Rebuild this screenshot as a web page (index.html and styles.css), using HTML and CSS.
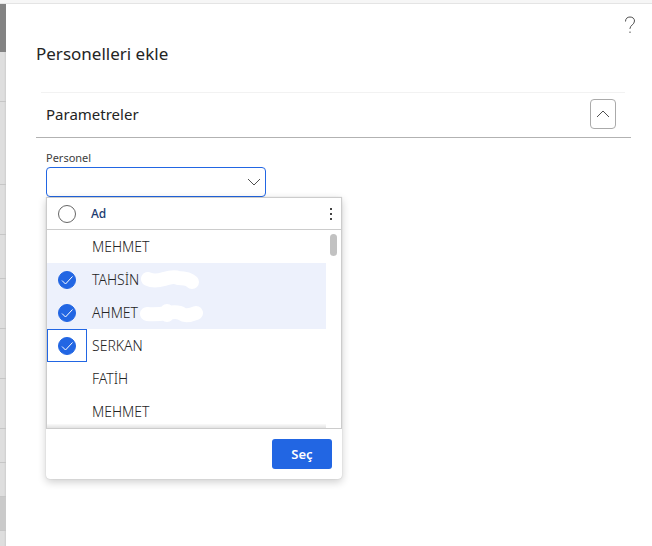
FILE: index.html
```html
<!DOCTYPE html>
<html lang="tr">
<head>
<meta charset="utf-8">
<title>Personelleri ekle</title>
<link rel="stylesheet" href="styles.css">
</head>
<body>
<div class="page">
  <div class="backdrop" aria-hidden="true">
    <div class="bar"></div>
    <div class="line tall"></div>
    <div class="line wide"></div>
    <div class="line"></div>
    <div class="line wide-end"></div>
    <div class="line"></div>
    <div class="line"></div>
    <div class="line"></div>
    <div class="line short"></div>
    <div class="line short"></div>
    <div class="line short dark"></div>
  </div>
  <main class="panel">
    <header class="panel-head">
      <h1>Personelleri ekle</h1>
      <button class="help" type="button" aria-label="Yardım">
        <svg width="12" height="18" viewBox="0 0 12 18"><path d="M1.500 5.500C1.500 2.500 3.300 1 6 1S10.500 2.500 10.500 5c0 3.500-4.500 4.300-4.500 7.500V13M6 15.500v1.500" /></svg>
      </button>
    </header>
    <section class="group">
      <div class="group-head">
        <h2>Parametreler</h2>
        <button class="collapse" type="button" aria-label="Daralt">
          <svg width="14" height="8" viewBox="0 0 14 8"><path d="M1 7l6-6 6 6" /></svg>
        </button>
      </div>
      <div class="field">
        <label for="personel">Personel</label>
        <div class="combo">
          <input id="personel" type="text" role="combobox" aria-expanded="true" aria-controls="menu">
          <button class="open" type="button" aria-label="Listeyi aç">
            <svg width="14" height="8" viewBox="0 0 14 8"><path d="M1 1l6 6 6-6" /></svg>
          </button>
          <div class="menu" id="menu">
            <div class="grid">
              <table>
                <thead>
                  <tr>
                    <th class="pick"><input type="checkbox" aria-label="Tümünü seç"></th>
                    <th>Ad</th>
                    <th class="edge"><button class="more" type="button" aria-label="Seçenekler"><svg width="4" height="14" viewBox="0 0 4 14"><path d="M1 1h2v2H1zM1 6h2v2H1zM1 11h2v2H1z" /></svg></button></th>
                  </tr>
                </thead>
                <tbody>
                  <tr><td class="pick"></td><td>MEHMET</td><td class="edge"></td></tr>
                  <tr class="on"><td class="pick"><input type="checkbox" checked aria-label="TAHSİN"></td><td>TAHSİN<svg class="mask" width="64" height="22" viewBox="0 0 64 22"><path d="M9 10q6 3 16 0t14-1q10 0 14 4" /></svg></td><td class="edge"></td></tr>
                  <tr class="on"><td class="pick"><input type="checkbox" checked aria-label="AHMET"></td><td>AHMET<svg class="mask" width="64" height="22" viewBox="0 0 64 22"><path d="M8 12q9 1 20-1t15 1 14-1M28 9v4" /></svg></td><td class="edge"></td></tr>
                  <tr><td class="pick focus"><input type="checkbox" checked aria-label="SERKAN"></td><td>SERKAN</td><td class="edge"></td></tr>
                  <tr><td class="pick"></td><td>FATİH</td><td class="edge"></td></tr>
                  <tr><td class="pick"></td><td>MEHMET</td><td class="edge"></td></tr>
                </tbody>
              </table>
              <div class="thumb"></div>
              <div class="fade"></div>
            </div>
            <div class="menu-foot"><button class="submit" type="button">Seç</button></div>
          </div>
        </div>
      </div>
    </section>
  </main>
</div>
</body>
</html>
```
FILE: styles.css
```css
* { box-sizing: border-box; }
body {
  margin: 0;
  background: #fff;
  color: #242424;
  font-family: "Segoe UI", "Noto Sans", sans-serif;
  font-size: 14px;
}
h1, h2 { margin: 0; font-weight: 400; }
button { padding: 0; border: 0; background: none; font: inherit; cursor: pointer; }
svg { display: block; fill: none; stroke: #505050; stroke-width: 1; }

.page {
  display: flex;
  min-height: 100vh;
  padding-top: 4px;
  background: linear-gradient(#f6f6f6 3px, #e4e4e4 3px, #e4e4e4 4px, #fff 4px);
}
.backdrop {
  flex: none;
  width: 6px;
  background: linear-gradient(90deg, #dedede 4px, #cecece);
}
.bar { height: 48px; background: #838383; }
.line { height: 50px; border-bottom: 1px solid #c6c6c6; }
.wide { height: 83px; }
.wide-end { height: 44px; }
.short { height: 34px; }
.dark { background: #cacaca; }

.panel { flex: 1; padding: 0 21px 24px 30px; background: #fff; }
.panel-head {
  display: flex;
  justify-content: space-between;
  height: 88px;
  padding-top: 10px;
}
h1 { padding-top: 27px; font-size: 17px; line-height: 26px; }
.help {
  display: flex;
  align-items: center;
  justify-content: center;
  width: 22px;
  height: 22px;
  margin-right: -10px;
}
.group-head {
  display: flex;
  align-items: center;
  justify-content: space-between;
  height: 46px;
  padding: 0 15px 1px 10px;
  border-bottom: 1px solid #b2b2b2;
  background: linear-gradient(#f2f2f2, #f2f2f2) 5px 0 / calc(100% - 11px) 1px no-repeat;
}
h2 { font-size: 15px; line-height: 24px; }
.collapse {
  display: flex;
  align-items: center;
  justify-content: center;
  width: 26px;
  height: 30px;
  border: 1px solid #aaa;
  border-radius: 4px;
}

.field { padding: 11px 10px 0; }
label { display: block; color: #404040; font-size: 11px; line-height: 18px; }
.combo { position: relative; width: 220px; }
.combo > input {
  display: block;
  width: 100%;
  height: 30px;
  padding: 0 32px 0 10px;
  border: 1px solid #2266e3;
  border-radius: 4px;
  outline: 0;
  font: inherit;
}
.open {
  position: absolute;
  top: 1px;
  right: 1px;
  display: flex;
  align-items: center;
  justify-content: center;
  width: 22px;
  height: 28px;
}
.menu {
  position: absolute;
  top: 100%;
  left: 0;
  width: 296px;
  border-radius: 0 0 4px 4px;
  background: #fff;
  box-shadow: 0 3px 8px rgba(0, 0, 0, .2), 0 0 1px rgba(0, 0, 0, .25);
}
.grid { position: relative; border: 1px solid #ccc; }
table { width: 100%; border-spacing: 0; table-layout: fixed; }
th, td { padding: 0 0 0 5px; text-align: left; }
th {
  height: 32px;
  border-bottom: 1px solid #ccc;
  padding-left: 4px;
  color: #1c3a70;
  font-size: 12px;
  font-weight: 500;
}
td { position: relative; height: 33px; color: #242424; font-weight: 300; line-height: 20px; }
.pick, th.pick { width: 40px; padding: 0; }
.edge, th.edge { width: 15px; padding: 0; }
.on td:not(.edge) { background: #edf1fc; }
.pick input {
  display: block;
  width: 18px;
  height: 18px;
  margin: 0 auto;
  border: 1px solid #666;
  border-radius: 50%;
  appearance: none;
}
.pick input:checked {
  border-color: #2266e3;
  background: #2266e3 url("data:image/svg+xml,%3Csvg xmlns='http://www.w3.org/2000/svg' viewBox='0 0 16 16'%3E%3Cpath d='M3 8.500l3.500 3.500 7-7.500' fill='none' stroke='white'/%3E%3C/svg%3E") center / 16px no-repeat;
}
.focus { outline: 1px solid #2266e3; outline-offset: -1px; }
.more { display: block; width: 11px; padding: 0 3px; }
.more path { fill: #444; stroke: none; }
.mask { position: absolute; top: 6px; left: 52px; }
.mask path { stroke: #fff; stroke-width: 14; stroke-linecap: round; stroke-linejoin: round; }
.thumb {
  position: absolute;
  top: 36px;
  right: 4px;
  width: 7px;
  height: 22px;
  border-radius: 4px;
  background: #c2c2c2;
}
.fade {
  position: absolute;
  right: 15px;
  bottom: 0;
  left: 0;
  height: 4px;
  background: linear-gradient(#fafafa, #e2e2e2);
}
.menu-foot { display: flex; justify-content: flex-end; padding: 10px; }
.submit {
  width: 60px;
  height: 30px;
  border-radius: 3px;
  background: #2266e3;
  color: #fff;
  font-size: 13px;
  font-weight: 600;
}
```
